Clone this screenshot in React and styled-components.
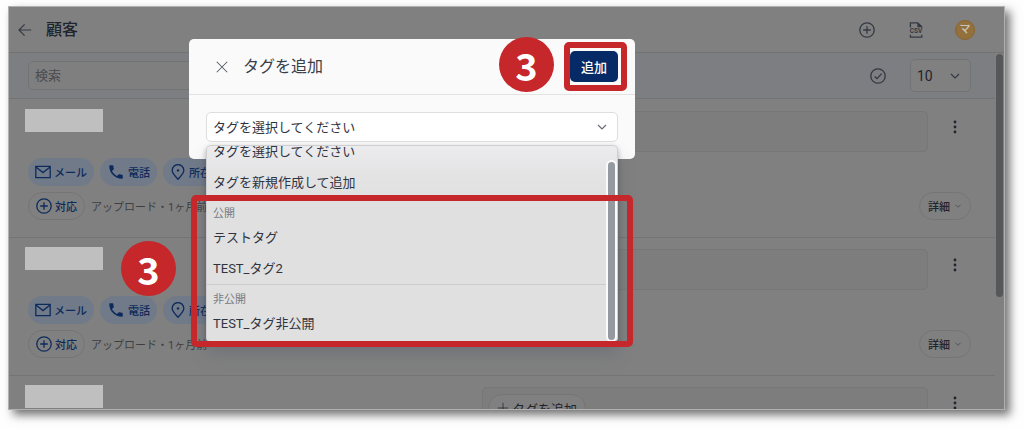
import React, { useState } from "react";
import styled, { createGlobalStyle, css } from "styled-components";
import { MdPhone } from "react-icons/md";

const GlobalStyle = createGlobalStyle`
  * {
    box-sizing: border-box;
  }

  body {
    margin: 0;
    background: #fefefe;
    font-family: Roboto, "Noto Sans CJK JP", sans-serif;
    color: #20242d;
  }

  button, input, select {
    font-family: inherit;
    margin: 0;
  }
`;

const Page = styled.div`
  height: 100vh;
  padding: 6px 19px 18px 8px;
`;

const Frame = styled.main`
  position: relative;
  display: flex;
  flex-direction: column;
  height: 100%;
  background: #808080;
  border: 1px solid #b0b0b0;
  box-shadow: 5px 5px 9px rgba(0, 0, 0, 0.55);
`;

const Header = styled.header`
  display: flex;
  align-items: center;
  flex: none;
  height: 46px;
  padding: 0 29px 0 8px;
  border-bottom: 1px solid #727272;
`;

const IconButton = styled.button`
  display: flex;
  justify-content: center;
  min-width: ${(p) => p.$min || 0}px;
  padding: 0;
  border: 0;
  background: none;
  color: ${(p) => p.$color || "#333842"};
  cursor: pointer;
`;

const Title = styled.h1`
  flex: 1;
  margin: 0 0 0 13px;
  font-size: 16px;
  line-height: 24px;
  font-weight: 500;
`;

const HeaderIcons = styled.div`
  display: flex;
  align-items: center;
  gap: 29px;
`;

const Avatar = styled.span`
  width: 20px;
  height: 20px;
  border-radius: 50%;
  background: #94703a;
  border: 1px solid #8a6430;
  color: #c9c4bb;
  font-size: 11px;
  font-weight: 500;
  line-height: 17px;
  text-align: center;
`;

const Toolbar = styled.div`
  display: flex;
  align-items: center;
  flex: none;
  height: 46px;
  margin-right: 9px;
  padding: 0 24px 0 19px;
  background: #7c7e81;
  border-bottom: 1px solid #727375;
`;

const SearchInput = styled.input`
  width: 50%;
  height: 29px;
  padding: 0 6px;
  border: 1px solid #717375;
  border-radius: 5px;
  background: #7f7f7f;
  color: #20242d;
  font-size: 13px;

  &::placeholder {
    color: #4a4c50;
    opacity: 1;
  }
`;

const ToolbarRight = styled.div`
  display: flex;
  align-items: center;
  gap: 24px;
  margin-left: auto;
`;

const SelectBox = styled.div`
  position: relative;
  display: flex;
  align-items: center;

  svg {
    position: absolute;
    right: 8px;
    color: ${(p) => p.$iconColor};
    pointer-events: none;
  }
`;

const PageSelect = styled.select`
  appearance: none;
  width: 61px;
  height: 33px;
  padding: 0 6px;
  border: 1px solid #727375;
  border-radius: 5px;
  background: #808080;
  color: #20242d;
  font-size: 14px;
`;

const List = styled.div`
  flex: 1;
  min-height: 0;
  margin-right: 9px;
  padding-top: 1px;
  overflow: hidden;
`;

const Row = styled.section`
  padding: 9px 0 17px;
  border-bottom: 1px solid #747474;
`;

const RowTop = styled.div`
  display: grid;
  grid-template-columns: minmax(0, 1fr) 446px 67px;
  margin-bottom: 6px;
`;

const NameMask = styled.div`
  width: 78px;
  height: 23px;
  margin-left: 16px;
  background: #bfbfbf;
`;

const TagBox = styled.div`
  height: 41px;
  margin-top: 2px;
  padding: 6px 5px;
  border: 1px solid #777777;
  border-radius: 5px;
  background: #7d7d7d;
`;

const TagAdd = styled.button`
  display: flex;
  align-items: center;
  gap: 3px;
  height: 28px;
  padding: 0 8px;
  border: 1px solid #757575;
  border-radius: 14px;
  background: #808080;
  color: #20242d;
  font-size: 13px;
`;

const MenuCell = styled.div`
  display: flex;
  justify-content: center;
  padding: 11px 13px 0 0;
`;

const RowBottom = styled.div`
  display: flex;
  align-items: flex-end;
  justify-content: space-between;
  padding: 0 24px 0 19px;
`;

const ChipLine = styled.div`
  display: flex;
  align-items: center;
  gap: 6px;
  margin-bottom: ${(p) => (p.$last ? 0 : 6)}px;
`;

const Chip = styled.button`
  display: flex;
  align-items: center;
  gap: 3px;
  height: 28px;
  padding: 0 7px;
  border: 0;
  border-radius: 14px;
  background: #717a88;
  color: #0d2a5c;
  font-size: 11px;
  font-weight: 500;

  ${(p) =>
    p.$outline &&
    css`
      background: none;
      border: 1px solid #757575;
    `}
`;

const Meta = styled.span`
  color: #3d3f43;
  font-size: 11px;
`;

const DetailButton = styled.button`
  display: flex;
  align-items: center;
  gap: 3px;
  height: 28px;
  padding: 0 7px 0 8px;
  border: 1px solid #757575;
  border-radius: 14px;
  background: none;
  color: #20242d;
  font-size: 11px;
  font-weight: 500;

  svg {
    color: #3f4450;
  }
`;

const PageScroll = styled.div`
  position: absolute;
  top: 47px;
  right: 1px;
  width: 7px;
  height: 243px;
  border-radius: 4px;
  background: #555759;
`;

const Dialog = styled.div`
  position: absolute;
  top: 32px;
  left: 180px;
  width: 446px;
  background: #fafafa;
  border-radius: 5px;
`;

const DialogHeader = styled.div`
  display: flex;
  align-items: center;
  height: 56px;
  padding: 0 17px 0 26px;
  border-bottom: 1px solid #e3e3e3;
`;

const DialogTitle = styled.h2`
  flex: 1;
  margin: 0 0 0 14px;
  font-size: 16px;
  line-height: 24px;
  font-weight: 400;
  color: #3a3e4a;
`;

const AddArea = styled.div`
  position: relative;
`;

const AddButton = styled.button`
  display: block;
  width: 48px;
  height: 31px;
  padding: 0;
  border: 0;
  border-radius: 5px;
  background: #052a66;
  color: #ffffff;
  font-size: 13px;
  font-weight: 500;
`;

const DialogBody = styled.div`
  position: relative;
  padding: 17px;
`;

const TagSelect = styled.select`
  appearance: none;
  width: 100%;
  height: 30px;
  padding: 0 6px;
  border: 1px solid #dedee0;
  border-radius: 5px;
  background: #ffffff;
  color: #30343e;
  font-size: 13px;
`;

const Dropdown = styled.div`
  position: absolute;
  top: 50px;
  left: 17px;
  right: 17px;
`;

/* anchored to the bottom so the first option is scrolled half out of view */
const OptionPanel = styled.div`
  display: flex;
  height: 196px;
  overflow: hidden;
  border: 1px solid #cfcfd1;
  border-bottom: 0;
  border-radius: 5px 5px 3px 3px;
  background: linear-gradient(#ececee 0, #e4e4e5 26px, #e0e0e0 56px);
  box-shadow: 0 12px 16px rgba(80, 90, 110, 0.35), 0 2px 5px rgba(0, 0, 0, 0.25);
`;

const Options = styled.div`
  display: flex;
  flex-direction: column;
  justify-content: flex-end;
  flex: 1;
  padding-bottom: 2px;
`;

const Option = styled.div`
  flex: none;
  height: 31px;
  padding: 0 6px;
  color: #30343e;
  font-size: 13px;
  line-height: 31px;
  cursor: pointer;
`;

const Group = styled.div`
  flex: none;
  border-top: 1px solid ${(p) => (p.$line ? "#cccccc" : "transparent")};
`;

const GroupLabel = styled.div`
  height: 23px;
  padding: 0 6px;
  color: #777a80;
  font-size: 11px;
  line-height: 29px;
`;

const ScrollTrack = styled.div`
  width: 11px;
  padding: 16px 2px 1px;

  &::before {
    content: "";
    display: block;
    height: 100%;
    border-radius: 4px;
    background: #959aa1;
    box-shadow: 0 0 0 2px #fafafa;
  }
`;

const Ring = styled.div`
  position: absolute;
  top: ${(p) => p.$top}px;
  right: ${(p) => p.$right}px;
  bottom: ${(p) => p.$bottom}px;
  left: ${(p) => p.$left}px;
  border: 6px solid #c6272a;
  border-radius: 5px;
  pointer-events: none;
`;

const StepBadge = styled.div`
  position: absolute;
  top: ${(p) => p.$top}px;
  left: ${(p) => p.$left}px;
  width: 55px;
  height: 55px;
  border-radius: 50%;
  background: #c6272a;
  color: #ffffff;
  font-family: "Noto Sans CJK JP", sans-serif;
  font-size: 38px;
  font-weight: 700;
  line-height: 55px;
  text-align: center;
`;

const Icon = ({ size = 16, width = 1, children }) => (
  <svg
    width={size}
    height={size}
    viewBox="0 0 16 16"
    fill="none"
    stroke="currentColor"
    strokeWidth={width}
    aria-hidden="true"
  >
    {children}
  </svg>
);

const ChevronIcon = ({ size = 16 }) => (
  <Icon size={size} width={1.2}>
    <path d="M4 6l4 4 4-4" />
  </Icon>
);

const PlusCircleIcon = () => (
  <Icon width={1.3}>
    <circle cx="8" cy="8" r="7.2" />
    <path d="M8 4.2v7.6M4.2 8h7.6" />
  </Icon>
);

const CsvIcon = () => (
  <Icon width={1.3}>
    <path d="M2.4 5.400V.8h7.400l4 4v.8M2.400 12.800v2.400h11.400v-2.400" />
    <path d="M9.400.800v4.400h4.400z" fill="currentColor" stroke="none" />
    <text
      x="8"
      y="11.400"
      fontSize="6.500"
      fontWeight="700"
      fontFamily="Roboto, sans-serif"
      textAnchor="middle"
      fill="currentColor"
      stroke="none"
    >
      CSV
    </text>
  </Icon>
);

const DotsIcon = () => (
  <svg width="4" height="14" viewBox="0 0 4 14" fill="currentColor" aria-hidden="true">
    <circle cx="2" cy="2" r="1.4" />
    <circle cx="2" cy="7" r="1.4" />
    <circle cx="2" cy="12" r="1.4" />
  </svg>
);

const customers = [1, 2, 3];

function CustomerRow() {
  return (
    <Row>
      <RowTop>
        <NameMask />
        <TagBox>
          <TagAdd type="button">
            <Icon size={12}>
              <path d="M8 1v14M1 8h14" />
            </Icon>
            タグを追加
          </TagAdd>
        </TagBox>
        <MenuCell>
          <IconButton type="button" aria-label="メニュー" $color="#20242d">
            <DotsIcon />
          </IconButton>
        </MenuCell>
      </RowTop>
      <RowBottom>
        <div>
          <ChipLine>
            <Chip type="button">
              <Icon width={1.3}>
                <path d="M.8 2.4h14.4v11.2H.8zM1 3l7 5.6L15 3" />
              </Icon>
              メール
            </Chip>
            <Chip type="button">
              <MdPhone size={18} />
              電話
            </Chip>
            <Chip type="button">
              <Icon width={1.3}>
                <path d="M8 15.2C4.6 11.6 2.2 9 2.2 6.4a5.8 5.8 0 0 1 11.6 0c0 2.6-2.4 5.2-5.8 8.8z" />
                <circle cx="8" cy="6.4" r="1.2" fill="currentColor" stroke="none" />
              </Icon>
              所在地
            </Chip>
          </ChipLine>
          <ChipLine $last>
            <Chip type="button" $outline>
              <PlusCircleIcon />
              対応
            </Chip>
            <Meta>アップロード・1ヶ月前</Meta>
          </ChipLine>
        </div>
        <DetailButton type="button">
          詳細
          <ChevronIcon size={10} />
        </DetailButton>
      </RowBottom>
    </Row>
  );
}

function AddTagDialog() {
  const [tag, setTag] = useState("");

  return (
    <Dialog role="dialog" aria-labelledby="dialog-title">
      <DialogHeader>
        <IconButton type="button" aria-label="閉じる" $color="#555964">
          <Icon size={14} width={1.2}>
            <path d="M2 2l12 12M14 2L2 14" />
          </Icon>
        </IconButton>
        <DialogTitle id="dialog-title">タグを追加</DialogTitle>
        <AddArea>
          <AddButton type="button">追加</AddButton>
          <Ring $top={-9} $right={-9} $bottom={-9} $left={-6} />
          <StepBadge $top={-14} $left={-71}>3</StepBadge>
        </AddArea>
      </DialogHeader>
      <DialogBody>
        <SelectBox $iconColor="#666b76">
          <TagSelect aria-label="タグ" value={tag} onChange={(e) => setTag(e.target.value)}>
            <option value="">タグを選択してください</option>
            <option value="new">タグを新規作成して追加</option>
            <optgroup label="公開">
              <option>テストタグ</option>
              <option>TEST_タグ2</option>
            </optgroup>
            <optgroup label="非公開">
              <option>TEST_タグ非公開</option>
            </optgroup>
          </TagSelect>
          <ChevronIcon />
        </SelectBox>
        <Dropdown>
          <OptionPanel>
            <Options role="listbox" aria-label="タグ">
              <Option role="option" onClick={() => setTag("")}>タグを選択してください</Option>
              <Option role="option" onClick={() => setTag("new")}>タグを新規作成して追加</Option>
              <Group role="group" aria-label="公開">
                <GroupLabel>公開</GroupLabel>
                <Option role="option" onClick={() => setTag("テストタグ")}>テストタグ</Option>
                <Option role="option" onClick={() => setTag("TEST_タグ2")}>TEST_タグ2</Option>
              </Group>
              <Group role="group" aria-label="非公開" $line>
                <GroupLabel>非公開</GroupLabel>
                <Option role="option" onClick={() => setTag("TEST_タグ非公開")}>TEST_タグ非公開</Option>
              </Group>
            </Options>
            <ScrollTrack />
          </OptionPanel>
          <Ring $top={50} $right={-15} $bottom={-6} $left={-15} />
          <StepBadge $top={96} $left={-85}>3</StepBadge>
        </Dropdown>
      </DialogBody>
    </Dialog>
  );
}

function App() {
  return (
    <>
      <GlobalStyle />
      <Page>
        <Frame>
          <Header>
            <IconButton type="button" aria-label="戻る">
              <Icon width={1.2}>
                <path d="M14.2 8H2M7.6 2.4L2 8l5.6 5.6" />
              </Icon>
            </IconButton>
            <Title>顧客</Title>
            <HeaderIcons>
              <IconButton type="button" aria-label="追加" $min={20}>
                <PlusCircleIcon />
              </IconButton>
              <IconButton type="button" aria-label="CSV" $min={20}>
                <CsvIcon />
              </IconButton>
              <Avatar>マ</Avatar>
            </HeaderIcons>
          </Header>
          <Toolbar>
            <SearchInput type="text" placeholder="検索" aria-label="検索" />
            <ToolbarRight>
              <IconButton type="button" aria-label="選択">
                <Icon width={1.3}>
                  <circle cx="8" cy="8" r="7.2" />
                  <path d="M4.6 8.4l2.4 2.2 4.6-5" />
                </Icon>
              </IconButton>
              <SelectBox $iconColor="#333842">
                <PageSelect aria-label="表示件数" defaultValue="10">
                  <option>10</option>
                  <option>20</option>
                  <option>50</option>
                </PageSelect>
                <ChevronIcon />
              </SelectBox>
            </ToolbarRight>
          </Toolbar>
          <List>
            {customers.map((id) => (
              <CustomerRow key={id} />
            ))}
          </List>
          <PageScroll />
          <AddTagDialog />
        </Frame>
      </Page>
    </>
  );
}

export default App;
